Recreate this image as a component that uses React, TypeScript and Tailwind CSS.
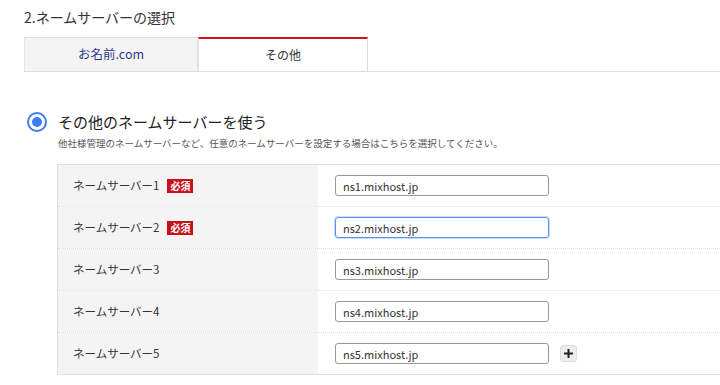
import React from 'react';

const servers = [
  { label: 'ネームサーバー1', value: 'ns1.mixhost.jp', required: true },
  { label: 'ネームサーバー2', value: 'ns2.mixhost.jp', required: true, focused: true },
  { label: 'ネームサーバー3', value: 'ns3.mixhost.jp' },
  { label: 'ネームサーバー4', value: 'ns4.mixhost.jp' },
  { label: 'ネームサーバー5', value: 'ns5.mixhost.jp', add: true },
];

const App: React.FC = () => {
  return (
    <div
      className="w-[720px] h-[385px] overflow-hidden bg-white text-[#333]"
      style={{ fontFamily: '"Noto Sans CJK JP", "Liberation Sans", sans-serif' }}
    >
      {/* Heading */}
      <h2 className="pl-6 pt-[7px] text-[14px] leading-5 text-[#333]">2.ネームサーバーの選択</h2>

      {/* Tabs */}
      <div className="mt-[10px] ml-6 flex border-b border-[#ddd]">
        <div className="w-[174px] h-[34px] flex items-center justify-center bg-[#f4f4f4] border border-b-0 border-[#e2e2e2] text-[12.5px] text-[#2b3a8f]">
          お名前.com
        </div>
        <div className="w-[170px] h-[34px] -mb-px flex items-center justify-center bg-white border-x border-[#ddd] border-t-2 border-t-[#d0121b] text-[12px] text-[#333]">
          その他
        </div>
      </div>

      {/* Radio option */}
      <div className="mt-[40px] ml-[27px] flex items-center gap-[11px]">
        <span className="w-[20px] h-[20px] rounded-full border-2 border-[#3b7ded] flex items-center justify-center">
          <span className="w-[10px] h-[10px] rounded-full bg-[#3b7ded]" />
        </span>
        <span className="text-[15px] leading-5 text-[#222]">その他のネームサーバーを使う</span>
      </div>
      <p className="ml-[58px] mt-[3px] text-[9.5px] leading-4 text-[#555]">
        他社様管理のネームサーバーなど、任意のネームサーバーを設定する場合はこちらを選択してください。
      </p>

      {/* Name server table */}
      <div className="mt-[13px] ml-[57px] border-t border-l border-[#ddd]">
        {servers.map((s, i) => (
          <div
            key={s.label}
            className={`flex h-[42px] ${i < servers.length - 1 ? 'border-b border-dotted border-[#ddd]' : 'border-b border-[#ddd]'}`}
          >
            <div className="w-[260px] bg-[#f4f4f4] pl-[15px] flex items-center gap-[8px] text-[11.5px] text-[#333]">
              <span>{s.label}</span>
              {s.required && (
                <span className="bg-[#c8101b] text-white text-[10px] font-bold leading-[14px] px-[3px]">必須</span>
              )}
            </div>
            <div className="flex-1 flex items-center pl-[17px] gap-[11px]">
              <input
                defaultValue={s.value}
                className={`w-[214px] h-[21px] rounded-[3px] px-[7px] text-[11px] text-[#333] outline-none ${
                  s.focused ? 'border border-[#5b8fef] shadow-[0_0_0_1px_rgba(91,143,239,0.3)]' : 'border border-[#999]'
                }`}
              />
              {s.add && (
                <button className="w-[17px] h-[17px] rounded-[3px] bg-[#ececec] border border-[#ddd] flex items-center justify-center">
                  <svg width="11" height="11" viewBox="0 0 11 11">
                    <path d="M5.5 1v9M1 5.5h9" stroke="#222" strokeWidth="2" />
                  </svg>
                </button>
              )}
            </div>
          </div>
        ))}
      </div>
    </div>
  );
};

export default App;
